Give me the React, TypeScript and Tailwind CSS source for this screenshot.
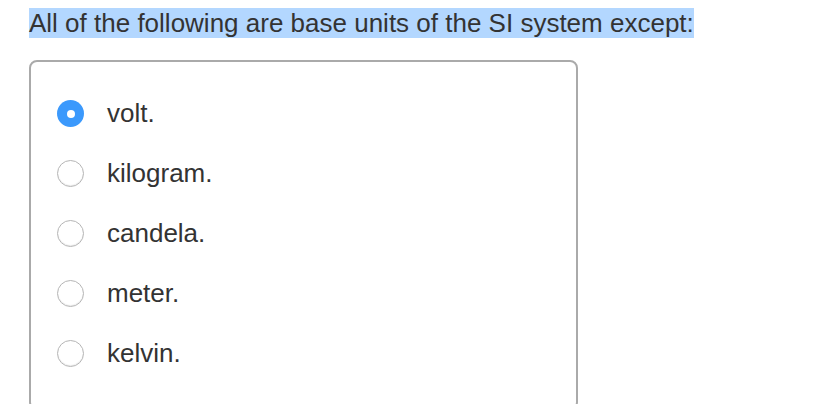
const options = ["volt.", "kilogram.", "candela.", "meter.", "kelvin."];

function Radio({ checked }: { checked: boolean }) {
  if (checked) {
    return (
      <span className="flex h-[27px] w-[27px] shrink-0 items-center justify-center rounded-full bg-[#3b99fc]">
        <span className="h-[8px] w-[8px] rounded-full bg-white" />
      </span>
    );
  }
  return (
    <span className="h-[27px] w-[27px] shrink-0 rounded-full border border-[#b5b5b5] bg-white shadow-[inset_0_-1px_1px_rgba(0,0,0,0.08)]" />
  );
}

export default function App() {
  return (
    <div
      className="h-[404px] w-[834px] overflow-hidden bg-white pl-[29px] pt-[8px] text-[#333]"
      style={{ fontFamily: '"Liberation Sans", Arial, sans-serif' }}
    >
      <p className="inline-block bg-[#b3d7ff] text-[26px] leading-[30px]">
        All of the following are base units of the SI system except:
      </p>
      <div className="mt-[21px] h-[350px] w-[549px] rounded-[8px] border-2 border-[#aaa] pl-[26px] pt-[38px]">
        <ul className="flex flex-col gap-[33px]">
          {options.map((o, i) => (
            <li key={o} className="flex h-[27px] items-center gap-[23px]">
              <Radio checked={i === 0} />
              <span className="text-[26px] leading-[27px]">{o}</span>
            </li>
          ))}
        </ul>
      </div>
    </div>
  );
}
